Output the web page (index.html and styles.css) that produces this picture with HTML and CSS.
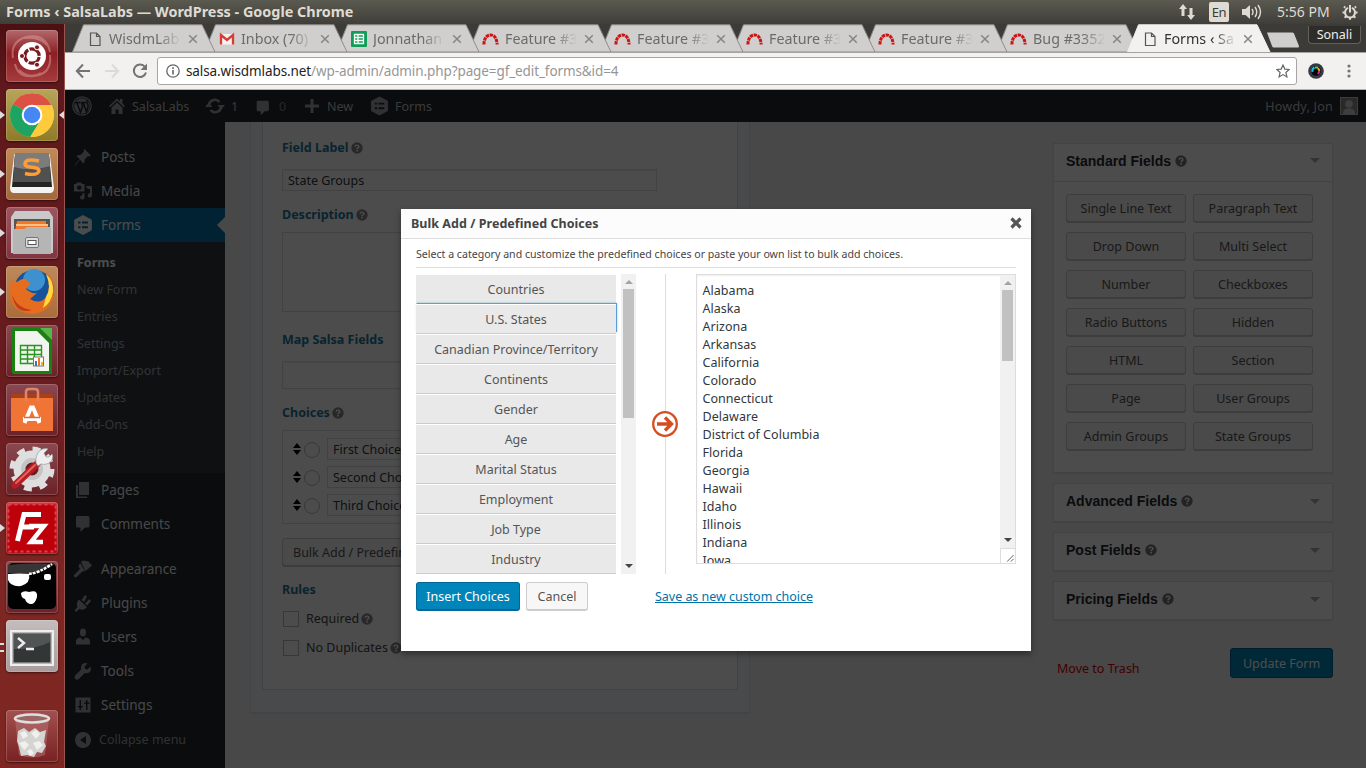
FILE: index.html
```html
<!DOCTYPE html>
<html lang="en">
<head>
<meta charset="utf-8">
<title>Forms ‹ SalsaLabs — WordPress</title>
<link rel="stylesheet" href="styles.css">
</head>
<body>
<svg class="defs" width="0" height="0">
  <symbol id="doc" viewBox="0 0 16 16"><path d="M3.5 2h6l3.500 3.500V14.500h-9.500zM9.500 2v3.500H13" fill="none" stroke="#555" stroke-width="1.200"/></symbol>
  <symbol id="redmine" viewBox="0 0 17 16"><path d="M1.900 13.500C2.200 7 4.800 4 8.500 4S14.800 7 15.100 13.500" fill="none" stroke="#cc1414" stroke-width="3" stroke-dasharray="3.300 .7"/></symbol>
  <symbol id="x" viewBox="0 0 10 10"><path d="M1.200 1.200l7.600 7.600M8.800 1.200L1.200 8.800" stroke="#858585" stroke-width="1.500"/></symbol>
  <symbol id="help" viewBox="0 0 12 12"><circle cx="6" cy="6" r="5.700"/><path d="M4.200 4.700C4.200 2.600 7.900 2.600 7.900 4.700 7.900 6 6.100 5.900 6.100 7.200" fill="none" stroke="#fff" stroke-width="1.400"/><rect x="5.300" y="8" width="1.600" height="1.500" fill="#fff"/></symbol>
  <symbol id="gf" viewBox="0 0 20 20"><path fill-rule="evenodd" d="M10 0l8 4.200q.9.500.9 1.600v8.400q0 1.100-.9 1.600L10 20l-8-4.200q-.9-.500-.9-1.600V5.800q0-1.100.9-1.600zM5.200 6.500v2h2.300v-2zM9 6.500v2h6v-2zM5.200 11.300v2h2.300v-2zM9 11.300v2h6v-2z"/></symbol>
  <symbol id="comment" viewBox="0 0 20 20"><path d="M4 2h11q1.500 0 1.500 1.500V12q0 1.500-1.500 1.500h-3L7.500 18v-4.500H4Q3 13.500 3 12V3.500Q3 2 4 2z"/></symbol>
</svg>

<header class="os-bar">
  <span class="os-title">Forms ‹ SalsaLabs — WordPress - Google Chrome</span>
  <div class="os-tray">
    <svg width="18" height="18" viewBox="0 0 18 18" fill="#dfdbd2"><path d="M5 1l4 5H6.500v7h-3V6H1zM13 17l-4-5h2.500V5h3v7H17z"/></svg>
    <span class="lang">En</span>
    <svg width="20" height="16" viewBox="0 0 20 16"><path d="M0 5h3.500L8 1v14l-4.500-4H0z" fill="#dfdbd2"/><path d="M10 5q2 3 0 6M13 3q3.500 5 0 10M16 1q5 7 0 14" fill="none" stroke="#dfdbd2" stroke-width="1.400"/></svg>
    <span class="clock">5:56 PM</span>
    <svg width="16" height="16" viewBox="0 0 16 16" fill="none" stroke="#dfdbd2"><path d="M6 3.900A5 5 0 1 0 10 3.900M8 1v7.500" stroke-width="2"/><path d="M3.200 3.700L2 2.500M12.800 3.700L14 2.500M2.600 8.500H.5M13.400 8.500h2.100M4.200 12.300L2.700 13.800M11.800 12.300l1.500 1.500M8 13.500v2.300" stroke-width="2"/></svg>
  </div>
</header>

<div class="desktop">
<nav class="launcher">
  <div class="tile ubuntu"><svg viewBox="0 0 52 52"><path d="M7 28Q4 12 20 7Q40 3 44 22M44 25Q46 44 28 46Q12 48 9 34M18 8Q34 6 42 16M35 43Q24 50 13 40" fill="none" stroke="#e6a9a9" stroke-opacity=".45" stroke-width="2"/><circle cx="26" cy="26" r="14" fill="#fff"/><circle cx="26" cy="26" r="7.200" fill="none" stroke="#7a1a1e" stroke-width="3.200" stroke-dasharray="13.600 1.500" stroke-dashoffset="-1"/><g fill="#7a1a1e" stroke="#fff" stroke-width="1"><circle cx="16" cy="26" r="2.500"/><circle cx="31" cy="17.300" r="2.500"/><circle cx="31" cy="34.700" r="2.500"/></g></svg></div>
  <div class="tile chrome run act"><svg viewBox="0 0 52 52"><circle cx="26" cy="26" r="22" fill="#ffcb3d"/><path d="M26 26L7 15A22 22 0 0 1 45.500 16H26z" fill="#dd5144"/><path d="M26 26L7 15A22 22 0 0 0 24 48L34.500 31z" fill="#1da462"/><path d="M45.500 16H26L35 31 25 48A22 22 0 0 0 45.500 16z" fill="#ffcb3d"/><circle cx="26" cy="26" r="10.300" fill="#fff"/><circle cx="26" cy="26" r="8.300" fill="#4587f3"/></svg></div>
  <div class="tile sublime run"><svg viewBox="0 0 52 52"><path d="M8 8Q8 5 11 5H41Q44 5 44 8L48 40Q48 45 44 45H8Q4 45 4 40z" fill="#f2f2f2"/><path d="M9 7Q9 5 11 5H41Q43 5 43 7L46 39H6z" fill="#222"/><path d="M9 7Q9 5 11 5H41Q43 5 43 7L45 34H7z" fill="#505050"/><path d="M9 7Q9 5 11 5H41Q43 5 43 7L44 18Q26 24 8 19z" fill="#7c7c7c"/><path d="M33 13Q19 10 19 16C19 21 33 17.500 33 23Q32 28 19 25.500" fill="none" stroke="#ff9d35" stroke-width="3.500"/></svg></div>
  <div class="tile files run"><svg viewBox="0 0 52 52"><path d="M9 4H43L47 10V46H5V10z" fill="#c9c9c9"/><path d="M8 12H44V24H8z" fill="#555"/><path d="M11 14H40V24H9z" fill="#f47721"/><path d="M10 17H42V24H10z" fill="#f8c187"/><path d="M10 19H42V24H10z" fill="#ef7a2c"/><path d="M7 22H18L21 20H45V47H7z" fill="#b5b5b5"/><rect x="19.500" y="30.500" width="13" height="10" rx="1.500" fill="#ddd" stroke="#777"/><rect x="22" y="33.500" width="8" height="4" fill="#fff" stroke="#555"/></svg></div>
  <div class="tile firefox run"><svg viewBox="0 0 52 52"><circle cx="28" cy="24" r="20" fill="#17539a"/><circle cx="28" cy="14" r="11" fill="#3d91cf"/><path d="M5 14L11 16Q16 12 20 13Q21 16 25 17L20 23Q25 28 31 27L24 33Q34 39 40 31Q46 22 40 6Q48 13 48 25Q47 46 26 48Q3 46 4 25Q4 18 5 14z" fill="#e66c20"/><path d="M40 31Q46 22 40 8Q48 15 47 26Q45 37 37 42z" fill="#ffd93d"/><path d="M6 28Q10 42 26 44Q9 49 6 28z" fill="#c23e18"/></svg></div>
  <div class="tile calc"><svg viewBox="0 0 52 52"><path d="M8 3H34L46 15V49H8Q6 49 6 47V5Q6 3 8 3z" fill="#17820f"/><path d="M9 6H31L43 18V46H9z" fill="#f1f4ef"/><path d="M34 3H46V15z" fill="#52b848"/><path d="M14 20.500H36M14 25H36M14 29.500H36M14 34H36M14 38.500H36M14.500 20V39M21.500 20V39M28.500 20V39M35.500 20V39" stroke="#299421" stroke-width="1.400"/><rect x="27.500" y="32" width="10" height="9" fill="#fff" stroke="#777"/><path d="M29 36h2v5h-2z" fill="#3377c2"/><path d="M32 33h2v8h-2z" fill="#f07522"/><path d="M35 37h2v4h-2z" fill="#e5b520"/></svg></div>
  <div class="tile software"><svg viewBox="0 0 52 52"><path d="M5 10H47V14H5z" fill="#a93f19"/><path d="M5 14H47V47H5z" fill="#ef7436"/><path d="M20 17V8Q20 5 23 5H29Q32 5 32 8V17" fill="none" stroke="#e48562" stroke-width="2.500"/><path d="M18.500 39L25 23.500H27L33.500 39M17 35H35" fill="none" stroke="#fff" stroke-width="4"/><path d="M18 33.500H34" stroke="#e66828" stroke-width="1.500"/></svg></div>
  <div class="tile settings"><svg viewBox="0 0 52 52"><circle cx="26" cy="26" r="18.500" fill="#dedede"/><circle cx="26" cy="26" r="20" fill="none" stroke="#dedede" stroke-width="5" stroke-dasharray="7.850 7.850"/><circle cx="26" cy="26" r="11" fill="#c4c4c4"/><circle cx="26" cy="26" r="6.500" fill="#681b20"/><path d="M9 42L31 21" stroke="#b51e22" stroke-width="7" stroke-linecap="round"/><path d="M10 40L29 22" stroke="#e56160" stroke-width="2" stroke-linecap="round"/><path d="M30 20C29 10 35 4 42 6L38 10 40 14 43 14 46 11C49 17 42 23 35 21L32 23z" fill="#eee" stroke="#999" stroke-width=".7"/></svg></div>
  <div class="tile filezilla run"><svg viewBox="0 0 52 52"><rect x="2.500" y="2.500" width="47" height="47" fill="#bd0009" stroke="#d8464d" stroke-width="2" stroke-dasharray="3 3"/><path d="M11.500 39L18 12.500H35M14 25H28" fill="none" stroke="#fff" stroke-width="5"/><path d="M23 24H38L25 40H37" fill="none" stroke="#fff" stroke-width="4.500"/></svg></div>
  <div class="tile dark"><svg viewBox="0 0 52 52"><rect x="2" y="2" width="48" height="46" rx="5" fill="#020202"/><path d="M2 4Q24 1 49 3L25 13 2 12z" fill="#373535"/><path d="M2 13Q14 12 23 13Q25 22 15 25Q5 26 2 19z" fill="#fff"/><path d="M23 13Q33 12 46 3" fill="none" stroke="#fff" stroke-width="2.500" stroke-dasharray="3 1"/><path d="M15 32Q18 29 23 31Q32 28 31 36Q29 44 24 43Q20 42 19 38Q15 37 15 32z" fill="#fff"/><rect x="38" y="13" width="7" height="6" rx="2" fill="#fff"/></svg></div>
  <div class="tile terminal run2"><svg viewBox="0 0 52 52"><rect x="4" y="10" width="44" height="36" fill="#eee"/><rect x="6" y="12" width="40" height="32" fill="#b8b8b8"/><rect x="7.500" y="13.500" width="37" height="29" fill="#323636"/><path d="M8 14H44V22Q28 30 8 29z" fill="#505454"/><path d="M12 18L18 23 12 28M20 29H28" fill="none" stroke="#eee" stroke-width="2.400"/></svg></div>
  <div class="tile trash"><svg viewBox="0 0 52 52"><path d="M9 9L13 45Q26 50 39 45L43 9" fill="#c98888" fill-opacity=".4"/><path d="M12 21L18 18 23 22 29 18 34 22 40 20 38 32 40 36 36 43 31 42 28 47 21 45 15 46 13 37 11 31z" fill="#d4d4d1"/><path d="M14 23l5-2 3 5-5 3zM25 23l5-3 4 4-4 5zM13 33l6-2 4 4-5 5zM27 33l6-2 4 4-6 5zM21 41l4-2 3 4-4 3z" fill="#f0f0ee"/><ellipse cx="26" cy="8.500" rx="17" ry="4" fill="#9a6666" stroke="#dedede" stroke-width="2.600"/></svg></div>
</nav>

<main class="browser">
  <div class="tabs">
    <div class="tab t0"><svg class="shape" viewBox="0 0 144 28"><path d="M.5 28L11.500.8H130L143 28z"/></svg><svg class="fav"><use href="#doc"/></svg><span>WisdmLab</span><svg class="close"><use href="#x"/></svg></div>
    <div class="tab t1"><svg class="shape" viewBox="0 0 144 28"><path d="M.5 28L11.500.8H130L143 28z"/></svg><svg class="fav" viewBox="0 0 16 16"><path d="M1.500 3h13v10.500h-13z" fill="#f2f2f2"/><path d="M2 13.500V4l6 5 6-5v9.500" fill="none" stroke="#d93d32" stroke-width="2.300"/></svg><span>Inbox (70)</span><svg class="close"><use href="#x"/></svg></div>
    <div class="tab t2"><svg class="shape" viewBox="0 0 144 28"><path d="M.5 28L11.500.8H130L143 28z"/></svg><svg class="fav" viewBox="0 0 16 16"><rect width="16" height="16" rx="1" fill="#0f9d58"/><path d="M3.500 3.500h9v9h-9zM3.500 6.500h9M3.500 9.500h9M7 3.500v9" fill="none" stroke="#fff" stroke-width="1.300"/></svg><span>Jonnathan</span><svg class="close"><use href="#x"/></svg></div>
    <div class="tab t3"><svg class="shape" viewBox="0 0 144 28"><path d="M.5 28L11.500.8H130L143 28z"/></svg><svg class="fav"><use href="#redmine"/></svg><span>Feature #3</span><svg class="close"><use href="#x"/></svg></div>
    <div class="tab t4"><svg class="shape" viewBox="0 0 144 28"><path d="M.5 28L11.500.8H130L143 28z"/></svg><svg class="fav"><use href="#redmine"/></svg><span>Feature #3</span><svg class="close"><use href="#x"/></svg></div>
    <div class="tab t5"><svg class="shape" viewBox="0 0 144 28"><path d="M.5 28L11.500.8H130L143 28z"/></svg><svg class="fav"><use href="#redmine"/></svg><span>Feature #3</span><svg class="close"><use href="#x"/></svg></div>
    <div class="tab t6"><svg class="shape" viewBox="0 0 144 28"><path d="M.5 28L11.500.8H130L143 28z"/></svg><svg class="fav"><use href="#redmine"/></svg><span>Feature #3</span><svg class="close"><use href="#x"/></svg></div>
    <div class="tab t7"><svg class="shape" viewBox="0 0 144 28"><path d="M.5 28L11.500.8H130L143 28z"/></svg><svg class="fav"><use href="#redmine"/></svg><span>Bug #3352</span><svg class="close"><use href="#x"/></svg></div>
    <div class="tab on"><svg class="shape" viewBox="0 0 144 28"><path d="M.5 28L11.500.8H130L143 28z"/></svg><svg class="fav"><use href="#doc"/></svg><span>Forms ‹ Sa</span><svg class="close"><use href="#x"/></svg></div>
    <svg class="newtab" viewBox="0 0 34 16"><path d="M1 .5H26q1.500 0 2 1L33 14q0 1.500-1 1.500H8Q6.500 15.500 6 14z" fill="#d0cecd"/></svg>
    <span class="profile">Sonali</span>
  </div>
  <div class="toolbar">
    <svg class="back" width="16" height="16" viewBox="0 0 16 16"><path d="M15 8H2M8 1.500L1.800 8 8 14.500" fill="none" stroke="#737373" stroke-width="2"/></svg>
    <svg class="fwd" width="16" height="16" viewBox="0 0 16 16"><path d="M1 8H14M8 1.500L14.200 8 8 14.500" fill="none" stroke="#dadada" stroke-width="2"/></svg>
    <svg class="reload" width="16" height="16" viewBox="0 0 16 16"><path d="M13 4A6.200 6.200 0 1 0 14 9.500" fill="none" stroke="#737373" stroke-width="2"/><path d="M15 .5V7H8.500z" fill="#737373"/></svg>
    <div class="omni">
      <svg width="14" height="14" viewBox="0 0 14 14"><circle cx="7" cy="7" r="6.200" fill="none" stroke="#666" stroke-width="1.300"/><path d="M7 6v4.500M7 3.300v1.600" stroke="#666" stroke-width="1.600"/></svg>
      <span class="url"><b>salsa.wisdmlabs.net</b>/wp-admin/admin.php?page=gf_edit_forms&amp;id=4</span>
      <svg class="star" width="14" height="14" viewBox="0 0 14 14"><path d="M7 1l1.800 4.100 4.400.4-3.300 3 1 4.400L7 10.600 3.100 12.900l1-4.400-3.300-3 4.400-.4z" fill="none" stroke="#666" stroke-width="1.200"/></svg>
    </div>
    <svg class="lens" width="16" height="16" viewBox="0 0 16 16"><circle cx="8" cy="8" r="7.800" fill="#363844"/><circle cx="8" cy="8" r="4.800" fill="#060606"/><path d="M4.500 9a4 4 0 0 1 2-4.500" stroke="#12b9d8" stroke-width="2" fill="none"/><path d="M7 4.500h3" stroke="#45d850" stroke-width="2"/><path d="M10 5l1.500 3" stroke="#e2b020" stroke-width="2"/><path d="M11.500 8l-1.500 3" stroke="#d9229b" stroke-width="2"/></svg>
    <svg class="dots" width="4" height="14" viewBox="0 0 4 14" fill="#737373"><circle cx="2" cy="2" r="1.600"/><circle cx="2" cy="7" r="1.600"/><circle cx="2" cy="12" r="1.600"/></svg>
  </div>

  <div class="page">
    <div class="adminbar">
      <svg class="wp" width="20" height="20" viewBox="0 0 20 20"><circle cx="10" cy="10" r="9.200" fill="none" stroke="#a0a5aa" stroke-width="1.300"/><circle cx="10" cy="10" r="7.800" fill="#a0a5aa"/><path d="M3 6.500H8M4.800 6.500L8.500 16.500 10.600 10 9.300 6.500M8.500 6.500H14M11.200 6.500L14.500 16 16 11Q16.500 9 15.200 7.200Q14.200 5 15.800 4.400" fill="none" stroke="#23282d" stroke-width="1.500"/></svg>
      <svg class="home" width="18" height="18" viewBox="0 0 18 18"><path d="M1 9L9 1.500 12 4.300V2h2.500v4.600L17 9l-1 1.200-7-6.400-7 6.400zM3.500 10.500L9 5.500l5.500 5V17h-4v-4.500h-3V17h-4z"/></svg>
      <span class="site">SalsaLabs</span>
      <svg class="upd" width="20" height="18" viewBox="0 0 20 18"><path d="M4 7.500A6 6 0 0 1 14.500 5M16 10.500A6 6 0 0 1 5.500 13" fill="none" stroke="#a0a5aa" stroke-width="2.700"/><path d="M0 10h7.500L3.700 5.500zM12.500 8H20L16.300 12.500z"/></svg>
      <span class="n1">1</span>
      <svg class="cm" width="18" height="18"><use href="#comment"/></svg>
      <span class="n0">0</span>
      <svg class="plus" width="14" height="14" viewBox="0 0 14 14"><path d="M5.500 0h3v5.500H14v3H8.500V14h-3V8.500H0v-3h5.500z"/></svg>
      <span class="new">New</span>
      <svg class="gfi" width="19" height="20"><use href="#gf"/></svg>
      <span>Forms</span>
      <span class="howdy">Howdy, Jon</span>
      <svg class="avatar" width="18" height="18" viewBox="0 0 18 18"><rect width="18" height="18" fill="#c5c5c5"/><rect x="1" y="1" width="16" height="16" fill="#8b8b8b"/><circle cx="9" cy="7" r="3.800" fill="#d0d0d0"/><path d="M3 17q0-5 4-5.500h4q4 .5 4 5.500z" fill="#d0d0d0"/></svg>
    </div>
    <div class="wrap">
      <nav class="side">
        <a class="mi"><svg viewBox="0 0 20 20"><path d="M11.500 2l6.500 6.500-1.500 1-1.500-.5-3.500 3.500q.5 2.500-1 4l-3.500-3.800L2 18.500 1.500 18 6.800 12.300 3.500 9q1.500-1.500 4-1L11 4.500l-.5-1.500z"/></svg>Posts</a>
        <a class="mi"><svg viewBox="0 0 20 20"><path d="M1 3h2l1-1.500h4L9 3h2.500v7.500H1zM6.200 4.500a2.200 2.200 0 1 0 .01 0zM13 5h6v9.500a2.200 2.200 0 1 1-2-2.300V8h-2.500V6.500H13zM11.500 12v4.500a2.200 2.200 0 1 1-2-2.300V12z" fill-rule="evenodd"/></svg>Media</a>
        <a class="mi cur"><svg viewBox="0 0 20 20"><use href="#gf"/></svg>Forms</a>
        <div class="sub"><b>Forms</b><span>New Form</span><span>Entries</span><span>Settings</span><span>Import/Export</span><span>Updates</span><span>Add-Ons</span><span>Help</span></div>
        <a class="mi"><svg viewBox="0 0 20 20"><path d="M6 2h10v13H6zM3 5h2v11.500h9V18H3z"/></svg>Pages</a>
        <a class="mi"><svg viewBox="0 0 20 20"><use href="#comment"/></svg>Comments</a>
        <div class="gap"></div>
        <a class="mi"><svg viewBox="0 0 20 20"><path d="M8 3l2-1.500 5.500 1L19 6.500 12.500 12zM7 4l5 8-2.500.5L3 18.500Q.5 18 1 16L7 10 5.500 7z"/></svg>Appearance</a>
        <a class="mi"><svg viewBox="0 0 20 20"><path d="M6 6.500L14 14q-3 4-7.500 2L3 19 1.500 17.500 4.500 14Q2.500 10 6 6.500zM8.500 7L12 2l2 1.500L11 9zM12 10.500L16.500 6 18 8l-4 4.500z"/></svg>Plugins</a>
        <a class="mi"><svg viewBox="0 0 20 20"><ellipse cx="10" cy="5.500" rx="3" ry="4"/><path d="M3 17.500Q2 10.500 7.500 10.500L10 13l2.500-2.500Q18 10.500 17 17.500z"/></svg>Users</a>
        <a class="mi"><svg viewBox="0 0 20 20"><path d="M17.500 5.500l-3 3-2.500-.5-.5-2.500 3-3.200Q9 1 8 6.500l.2 2L2 14.500Q1 16.500 2.500 18T6 17.800L11.700 12Q17 13 18 8.500z"/></svg>Tools</a>
        <a class="mi"><svg viewBox="0 0 20 20"><path fill-rule="evenodd" d="M2.500 2.500h15v15h-15zM6.500 5v6H4.800v1.500h1.700V15H8v-2.500h1.700V11H8V5zM13 5v2.500h-1.700V9H13v6h1.500V9h1.700V7.500h-1.700V5z"/></svg>Settings</a>
        <a class="mi collapse"><svg viewBox="0 0 20 20"><path fill-rule="evenodd" d="M10 2a8 8 0 1 0 .01 0zM13 6v8l-6-4z"/></svg>Collapse menu</a>
      </nav>
      <section class="outer"><div class="inner">
        <h4 class="fl">Field Label<svg class="q"><use href="#help"/></svg></h4>
        <div class="inp first">State Groups</div>
        <h4 class="de">Description<svg class="q"><use href="#help"/></svg></h4>
        <div class="area"></div>
        <h4 class="ms">Map Salsa Fields</h4>
        <div class="inp map"></div>
        <h4 class="ch">Choices<svg class="q"><use href="#help"/></svg></h4>
        <div class="choices">
          <div><svg width="8" height="12" viewBox="0 0 8 12"><path d="M0 5L4 0l4 5zM0 7h8l-4 5z"/></svg><i></i><span>First Choice</span></div>
          <div><svg width="8" height="12" viewBox="0 0 8 12"><path d="M0 5L4 0l4 5zM0 7h8l-4 5z"/></svg><i></i><span>Second Choice</span></div>
          <div><svg width="8" height="12" viewBox="0 0 8 12"><path d="M0 5L4 0l4 5zM0 7h8l-4 5z"/></svg><i></i><span>Third Choice</span></div>
        </div>
        <span class="btn bulk">Bulk Add / Predefined Choices</span>
        <h4 class="ru">Rules</h4>
        <div class="check"><i></i>Required<svg class="q"><use href="#help"/></svg></div>
        <div class="check"><i></i>No Duplicates<svg class="q"><use href="#help"/></svg></div>
      </div></section>
      <aside class="fields">
        <div class="box std"><h3>Standard Fields<svg class="q"><use href="#help"/></svg><em></em></h3>
          <div class="grid"><span class="btn">Single Line Text</span><span class="btn">Paragraph Text</span><span class="btn">Drop Down</span><span class="btn">Multi Select</span><span class="btn">Number</span><span class="btn">Checkboxes</span><span class="btn">Radio Buttons</span><span class="btn">Hidden</span><span class="btn">HTML</span><span class="btn">Section</span><span class="btn">Page</span><span class="btn">User Groups</span><span class="btn">Admin Groups</span><span class="btn">State Groups</span></div>
        </div>
        <div class="box"><h3>Advanced Fields<svg class="q"><use href="#help"/></svg><em></em></h3></div>
        <div class="box"><h3>Post Fields<svg class="q"><use href="#help"/></svg><em></em></h3></div>
        <div class="box"><h3>Pricing Fields<svg class="q"><use href="#help"/></svg><em></em></h3></div>
        <div class="actions"><span class="trashlink">Move to Trash</span><span class="update">Update Form</span></div>
      </aside>
    </div>
    <div class="overlay"></div>
    <div class="modal">
      <div class="mhead"><b>Bulk Add / Predefined Choices</b><svg width="12" height="12" viewBox="0 0 12 12"><path d="M1.500 1.500l9 9M10.500 1.500l-9 9" stroke="#555" stroke-width="3.200"/></svg></div>
      <div class="mbody">
        <p>Select a category and customize the predefined choices or paste your own list to bulk add choices.</p>
        <div class="cols">
          <div class="cats"><span>Countries</span><span class="focus">U.S. States</span><span>Canadian Province/Territory</span><span>Continents</span><span>Gender</span><span>Age</span><span>Marital Status</span><span>Employment</span><span>Job Type</span><span>Industry</span></div>
          <div class="sb"><i class="up"></i><i class="thumb"></i><i class="down"></i></div>
          <div class="mid"><svg width="26" height="26" viewBox="0 0 26 26"><circle cx="13" cy="13" r="11.800" fill="#fff" stroke="#d54e21" stroke-width="2.300"/><path d="M5 13H19M13 6.500L19.500 13 13 19.500" fill="none" stroke="#d54e21" stroke-width="3.400"/></svg></div>
          <div class="ta"><div class="lines">Alabama<br>Alaska<br>Arizona<br>Arkansas<br>California<br>Colorado<br>Connecticut<br>Delaware<br>District of Columbia<br>Florida<br>Georgia<br>Hawaii<br>Idaho<br>Illinois<br>Indiana<br>Iowa</div>
            <div class="tside"><div class="sb"><i class="up"></i><i class="thumb"></i><i class="down"></i></div><svg class="grip" width="15" height="15" viewBox="0 0 15 15"><path d="M6.500 13.500l7-7M10.500 13.500l3-3" stroke="#555" stroke-width="1"/></svg></div></div>
        </div>
        <div class="mfoot"><span class="primary">Insert Choices</span><span class="cancel">Cancel</span><a>Save as new custom choice</a></div>
      </div>
    </div>
  </div>
</main>
</div>
</body>
</html>
```
FILE: styles.css
```css
* { box-sizing: border-box; }
body { margin: 0; width: 1366px; height: 768px; overflow: hidden; font: 12.5px/18px "Noto Sans", "Open Sans", sans-serif; color: #444; white-space: nowrap; }
svg { display: block; flex: none; }
.defs { position: absolute; }
h3, h4, p { margin: 0; }

/* desktop bar */
.os-bar { height: 24px; display: flex; align-items: center; justify-content: space-between; padding: 0 8px 0 6px; background: linear-gradient(#5b5a50, #3f3e39); color: #dfdbd2; }
.os-title { font-size: 14.4px; font-weight: 700; }
.os-tray { display: flex; align-items: center; font-size: 14.4px; }
.lang { width: 20px; height: 20px; margin: 0 13px 0 13px; border-radius: 2px; background: #dfdbd2; color: #3c3b37; font-size: 13px; line-height: 20px; text-align: center; letter-spacing: -.5px; }
.clock { width: 54px; margin: 0 11px 0 15px; font-size: 14px; }
.desktop { display: flex; height: 744px; }

/* launcher */
.launcher { width: 65px; padding: 6px 0 0 6px; display: flex; flex-direction: column; gap: 7px; background: linear-gradient(#4c1012, #5f181b 8%, #6a1c1f 50%, #7d2623 75%, #7e2722); border-right: 1px solid #9b5450; }
.tile { position: relative; width: 52px; height: 52px; flex: none; border-radius: 4px; background: linear-gradient(#8a4850, #6b2228); box-shadow: inset 0 0 0 1px rgba(255,255,255,.18), 0 1px 2px rgba(0,0,0,.5); }
.tile svg { width: 52px; height: 52px; }
.ubuntu { background: linear-gradient(#b2696c, #8c1f24 45%, #a63c3d); }
.chrome { background: linear-gradient(#b6a55c, #8f7a28); }
.sublime { background: linear-gradient(#c08a58, #a2683a); }
.files { background: linear-gradient(#9d5560, #803540); }
.firefox { background: linear-gradient(#bd8a5c, #aa6c3c); }
.filezilla { background: linear-gradient(#d0383f, #b0060f); }
.terminal { background: linear-gradient(#c5bcbc, #a99c9c); }
.trash { margin-top: 31px; background: linear-gradient(#a2504f, #7a2122); }
.run::before { content: ""; position: absolute; left: -6px; top: 22px; border: 4px solid transparent; border-left: 5px solid #ddd; border-right: 0; }
.act::after { content: ""; position: absolute; right: -6px; top: 22px; border: 4px solid transparent; border-right: 5px solid #ddd; border-left: 0; }
.run2::before { content: ""; position: absolute; left: -6px; top: 23px; width: 4px; height: 5px; border: solid #ddd; border-width: 2px 0; }

/* browser chrome */
.browser { flex: 1; display: flex; flex-direction: column; min-width: 0; }
.tabs { height: 28px; padding-left: 7px; display: flex; background: #3c3b37; }
.tab { position: relative; z-index: 1; flex: none; width: 144px; height: 28px; margin-right: -12px; padding: 2px 0 0 15px; display: flex; align-items: center; color: #6b6b6b; font-size: 14.3px; }
.t0 { z-index: 9; } .t1 { z-index: 8; } .t2 { z-index: 7; } .t3 { z-index: 6; } .t4 { z-index: 5; } .t5 { z-index: 4; } .t6 { z-index: 3; } .t7 { z-index: 2; }
.tab .shape { position: absolute; left: 0; top: 0; width: 144px; height: 28px; fill: #d1cfce; stroke: #8f8d8b; stroke-width: 1; z-index: -1; }
.tab.on { z-index: 10; color: #333; margin-left: -1px; margin-right: -5px; }
.on .shape { fill: #f2f1f0; stroke: #f2f1f0; }
.fav { width: 16px; height: 16px; margin-right: 6px; }
.t3 .fav, .t4 .fav, .t5 .fav, .t6 .fav, .t7 .fav { width: 17px; margin: 0 6px 0 -1px; }
.tab span { width: 76px; -webkit-mask-image: linear-gradient(90deg, #000 65%, transparent 95%); mask-image: linear-gradient(90deg, #000 65%, transparent 95%); }
.close { width: 10px; height: 10px; margin-left: 3px; }
.newtab { width: 34px; height: 16px; margin-top: 8px; }
.profile { width: 53px; height: 18px; margin: 2px 0 0 8px; border: 1px solid #62605b; border-top: 0; border-radius: 0 0 4px 4px; background: #2e2d2a; color: #eee; text-align: center; line-height: 17px; font-size: 12.5px; }
.toolbar { height: 38px; display: flex; align-items: center; padding-left: 10px; background: #f2f1f0; border-bottom: 1px solid #b4b2b0; border-top: 1px solid #a5a3a1; }
.fwd { margin-left: 13px; }
.reload { margin-left: 12px; }
.omni { width: 1140px; height: 28px; margin-left: 9px; padding: 0 6px 0 8px; display: flex; align-items: center; border: 1px solid #a8a6a4; border-radius: 3px; background: #fff; }
.url { margin-left: 6px; font-size: 13.5px; letter-spacing: -.1px; color: #969696; flex: 1; }
.url b { font-weight: 400; color: #222; }
.lens { margin-left: 11px; }
.dots { margin-left: 23px; }

/* wordpress page */
.page { position: relative; flex: 1; display: flex; flex-direction: column; background: #f1f1f1; overflow: hidden; }
.adminbar { height: 32px; padding: 0 8px 0 7px; display: flex; align-items: center; background: #23282d; color: #c3c4c7; fill: #a0a5aa; }
.adminbar span { padding-top: 1px; }
.home { margin-left: 16px; } .site { margin-left: 6px; width: 57px; }
.upd { margin-left: 16px; } .n1 { margin-left: 6px; width: 8px; }
.cm { margin: 3px 0 0 15px; } .n0 { margin-left: 7px; width: 9px; color: #82878c; }
.plus { margin-left: 17px; } .new { margin-left: 8px; width: 27px; }
.gfi { margin: 0 6px 0 16px; }
.howdy { margin: 0 7px 0 auto; letter-spacing: .25px; }
.wrap { flex: 1; display: flex; }
.side { width: 160px; padding-top: 18px; background: #23282d; }
.mi { display: flex; align-items: center; height: 34px; padding-left: 8px; gap: 8px; font-size: 13.5px; color: #eee; fill: #a0a5aa; }
.mi svg { width: 20px; height: 20px; }
.cur { position: relative; background: #0073aa; color: #fff; fill: #fff; }
.cur::after { content: ""; position: absolute; right: 0; top: 9px; border: 8px solid transparent; border-right-color: #f1f1f1; border-left: 0; }
.sub { height: 231px; padding: 7px 0 0 12px; display: flex; flex-direction: column; background: #32373c; color: #a4a9ae; line-height: 27px; }
.sub b { color: #fff; }
.gap { height: 11px; }
.collapse { padding-top: 2px; gap: 6px; color: #a0a5aa; font-size: 12.5px; }
.outer { width: 500px; height: 592px; margin-left: 25px; padding: 0 11px; background: #f4f8fb; border: 1px solid #dfe5ea; border-top: 0; border-bottom-width: 2px; }
.inner { height: 568px; padding: 16px 19px 0; background: #fff; border: 1px solid #ddd; border-top: 0; }
.q { width: 12px; height: 12px; margin-left: 2px; fill: #888; }
h4 { display: flex; align-items: center; height: 18px; padding-top: 2px; font-size: 12.5px; color: #23789c; }
.inp { width: 375px; height: 22px; padding-left: 5px; line-height: 21px; border: 1px solid #ddd; color: #32373c; box-shadow: inset 0 1px 2px rgba(0,0,0,.07); }
.first { margin-top: 13px; } .de { margin-top: 14px; }
.area { width: 375px; height: 80px; margin-top: 9px; border: 1px solid #ddd; }
.ms { margin-top: 18px; } .map { height: 28px; margin-top: 13px; } .ch { margin-top: 14px; }
.choices { width: 436px; height: 94px; margin-top: 9px; padding: 7px 0 0 10px; display: flex; flex-direction: column; gap: 6px; border: 1px solid #ddd; }
.choices div { display: flex; align-items: center; }
.choices i { width: 16px; height: 16px; margin: 2px 7px 0 3px; border: 1px solid #b4b9be; border-radius: 50%; }
.choices span { width: 240px; height: 22px; padding-left: 5px; line-height: 22px; border: 1px solid #ddd; color: #32373c; }
.btn { display: flex; align-items: center; justify-content: center; padding-top: 2px; border: 1px solid #ccc; border-radius: 3px; background: #f7f7f7; color: #555; box-shadow: 0 1px 0 #ccc; }
.bulk { width: 210px; height: 28px; margin-top: 14px; padding-left: 10px; justify-content: flex-start; }
.ru { margin: 14px 0 12px; }
.check { height: 18px; margin-bottom: 11px; display: flex; align-items: center; color: #444; line-height: 20px; }
.check i { width: 16px; height: 16px; margin: 0 7px 0 1px; border: 1px solid #b4b9be; }
.fields { width: 280px; margin: 21px 0 0 303px; }
.box { height: 39px; margin-bottom: 10px; border: 1px solid #e0e0e0; background: #fff; box-shadow: 0 1px 1px rgba(0,0,0,.08); }
.std { height: 330px; }
.box h3 { height: 37px; padding: 0 12px 3px; display: flex; align-items: center; font: 700 14px "Liberation Sans", Arial, sans-serif; color: #23282d; }
.std h3 { border-bottom: 1px solid #e0e0e0; height: 38px; padding-bottom: 4px; }
.box em { margin-left: auto; border: 5px solid transparent; border-top-color: #aaa; border-bottom: 0; }
.box .q { margin-left: 4px; fill: #777; }
.grid { display: grid; grid-template-columns: 120px 120px; grid-auto-rows: 28px; gap: 10px 7px; padding: 12px; }
.actions { display: flex; justify-content: space-between; margin-top: 28px; padding-left: 4px; }
.trashlink { margin-top: 12px; color: #d00; }
.update { width: 103px; height: 30px; line-height: 29px; text-align: center; background: #0085ba; border: 1px solid #006799; border-radius: 3px; color: #fff; }
.overlay { position: absolute; inset: 0; background: rgba(0,0,0,.7); }

/* bulk add dialog */
.modal { position: absolute; left: 336px; top: 119px; width: 630px; height: 442px; background: #fff; box-shadow: 0 3px 6px rgba(0,0,0,.4); }
.mhead { height: 30px; padding: 0 9px; display: flex; align-items: center; justify-content: space-between; background: #fcfcfc; border-bottom: 1px solid #ddd; color: #444; }
.mhead b { padding-left: 1px; letter-spacing: .04px; }
.mhead svg { margin-bottom: 2px; }
.mbody { padding: 0 15px; }
.mbody p { height: 29px; font-size: 10.6px; line-height: 31px; border-bottom: 1px solid #ddd; }
.cols { height: 300px; margin-top: 6px; display: flex; }
.cats { width: 200px; padding-top: 1px; }
.cats span { display: block; height: 29px; margin-bottom: 1px; line-height: 29px; text-align: center; background: #e9e9e9; border-bottom: 1px solid #ccc; color: #555; }
.cats .focus { box-shadow: 0 -1px 0 #fff, 1px -2px 0 #5b9dd9, 1px -2px 2px rgba(30,140,190,.5); }
.sb { width: 15px; height: 300px; margin-left: 5px; padding: 5px 2px; display: flex; flex-direction: column; background: #f1f1f1; }
.sb i { flex: none; align-self: center; }
.up { border: 4px solid transparent; border-bottom-color: #a3a3a3; border-top: 0; margin: 1px 0 5px; }
.thumb { width: 11px; height: 129px; background: #c1c1c1; }
.down { border: 4px solid transparent; border-top-color: #444; border-bottom: 0; margin: auto 0 1px; }
.mid { width: 60px; display: flex; align-items: center; justify-content: center; background: linear-gradient(#ddd, #ddd) 29px 0 / 1px 100% no-repeat; padding-right: 2px; }
.ta { width: 320px; height: 290px; display: flex; border: 1px solid #ddd; overflow: hidden; box-shadow: inset 0 1px 2px rgba(0,0,0,.07); color: #32373c; letter-spacing: .04px; }
.lines { flex: 1; padding: 7px 0 0 5.500px; }
.ta .sb { height: 273px; margin: 0; }
.ta .thumb { height: 71px; }
.grip { border: solid #ddd; border-width: 1px 0 0 1px; }
.mfoot { display: flex; margin-top: 8px; height: 29px; }
.primary, .cancel { width: 104px; line-height: 27px; text-align: center; border: 1px solid #006799; border-radius: 3px; background: #0085ba; color: #fff; border-bottom-width: 2px; }
.cancel { width: 62px; margin-left: 6px; background: #f7f7f7; border-color: #ccc; color: #555; }
.mfoot a { margin-left: 67px; line-height: 29px; color: #0073aa; text-decoration: underline; letter-spacing: -.03px; }
```
